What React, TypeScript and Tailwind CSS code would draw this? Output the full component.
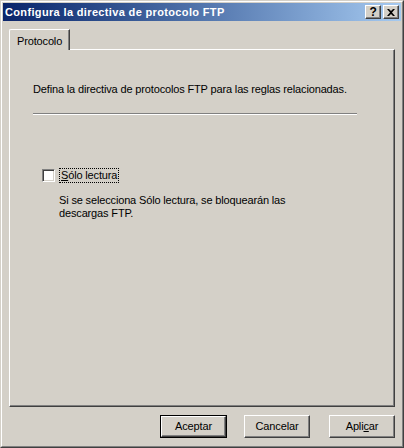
import React from 'react'

const raised =
  'border border-t-white border-l-white border-r-[#404040] border-b-[#404040] shadow-[inset_-1px_-1px_0_#808080]'

function CaptionButton({ children }: { children: React.ReactNode }) {
  return (
    <div
      className={`w-[16px] h-[14px] bg-[#d4d0c8] flex items-center justify-center ${raised}`}
    >
      {children}
    </div>
  )
}

function PushButton({
  label,
  isDefault,
  className = '',
}: {
  label: React.ReactNode
  isDefault?: boolean
  className?: string
}) {
  if (isDefault) {
    return (
      <div className={`w-[67px] h-[23px] border border-black ${className}`}>
        <div className={`w-full h-full flex items-center justify-center ${raised}`}>
          {label}
        </div>
      </div>
    )
  }
  return (
    <div className={`w-[66px] h-[23px] flex items-center justify-center ${raised} ${className}`}>
      {label}
    </div>
  )
}

export default function App() {
  return (
    <div className="w-[404px] h-[448px] bg-[#d4d0c8] text-black text-[11px] leading-[13px] tracking-[-0.15px] font-['Liberation_Sans',Arial,sans-serif]">
      <div className="h-full border border-t-[#d4d0c8] border-l-[#d4d0c8] border-r-[#404040] border-b-[#404040]">
        <div className="h-full border border-t-white border-l-white border-r-[#808080] border-b-[#808080] p-px flex flex-col">
          {/* title bar */}
          <div className="h-[18px] flex items-center pl-[2px] pr-[2px] bg-gradient-to-r from-[#0a246a] to-[#a6caf0]">
            <span className="flex-1 text-white font-bold tracking-[0.35px] whitespace-nowrap">
              Configura la directiva de protocolo FTP
            </span>
            <div className="flex gap-[2px]">
              <CaptionButton>
                <span className="font-bold text-[12px] leading-none">?</span>
              </CaptionButton>
              <CaptionButton>
                <svg width="8" height="7" viewBox="0 0 8 7">
                  <path d="M0 0h2l2 2 2-2h2L5 3.5 8 7H6L4 5 2 7H0l3-3.5z" fill="#000" />
                </svg>
              </CaptionButton>
            </div>
          </div>

          {/* tabs */}
          <div className="pt-[8px] pl-[6px] flex">
            <div className="relative z-10 -mb-px w-[61px] h-[21px] bg-[#d4d0c8] border-t border-l border-r border-t-white border-l-white border-r-[#404040] shadow-[inset_-1px_0_0_#808080] rounded-tl-[2px] flex items-center pl-[7px] pt-[2px]">
              Protocolo
            </div>
          </div>

          {/* page */}
          <div className={`mx-[6px] h-[358px] ${raised} pl-[23px] pt-[33px]`}>
            <p>Defina la directiva de protocolos FTP para las reglas relacionadas.</p>
            <div className="mt-[17px] w-[324px] h-[2px] border-t border-t-[#808080] border-b border-b-white" />

            <div className="mt-[53px] ml-[9px] flex items-center">
              <div className="w-[13px] h-[13px] bg-white border border-t-[#808080] border-l-[#808080] border-r-white border-b-white shadow-[inset_1px_1px_0_#404040,inset_-1px_-1px_0_#d4d0c8]" />
              <div className="ml-[4px] h-[15px] px-[1px] flex items-center border border-dotted border-black">
                <span>
                  <span className="underline">S</span>ólo lectura
                </span>
              </div>
            </div>

            <p className="mt-[11px] ml-[26px]">
              Si se selecciona Sólo lectura, se bloquearán las
              <br />
              descargas FTP.
            </p>
          </div>

          {/* buttons */}
          <div className="pt-[8px] pr-[6px] flex justify-end">
            <PushButton isDefault label="Aceptar" />
            <PushButton label="Cancelar" className="ml-[17px]" />
            <PushButton
              className="ml-[19px]"
              label={
                <span>
                  Apli<span className="underline">c</span>ar
                </span>
              }
            />
          </div>
        </div>
      </div>
    </div>
  )
}
